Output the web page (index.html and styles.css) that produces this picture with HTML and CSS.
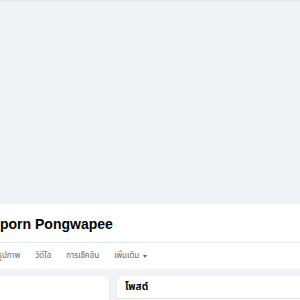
FILE: index.html
```html
<!DOCTYPE html>
<html lang="th">
<head>
    <meta charset="UTF-8">
    <meta name="viewport" content="width=device-width, initial-scale=1.0">
    <title>Profile</title>
    <link rel="stylesheet" href="styles.css">
</head>
<body>
    <!-- Cover -->
    <div class="cover"></div>

    <!-- Profile Header -->
    <header class="profile-head">
        <h1 class="name">porn Pongwapee</h1>
        <nav class="tabs">
            <a href="#">รูปภาพ</a>
            <a href="#">วิดีโอ</a>
            <a href="#">การเช็คอิน</a>
            <a href="#" class="more">เพิ่มเติม <span class="caret"></span></a>
        </nav>
    </header>

    <!-- Content -->
    <main class="content">
        <section class="card side"></section>
        <section class="card posts">
            <h2>โพสต์</h2>
        </section>
    </main>
</body>
</html>
```

FILE: styles.css
```css
/* General Styling */
body {
    margin: 0;
    padding: 0;
    background-color: #f0f2f5;
    font-family: "Liberation Sans", "Noto Sans Thai", "Noto Sans", sans-serif;
    color: #050505;
    overflow: hidden;
    height: 300px;
}

.cover {
    height: 204px;
    box-shadow: inset 0 2px 2px -1px rgba(0, 0, 0, 0.06);
}

/* Profile Header */
.profile-head {
    background-color: #fff;
    height: 65px;
    display: flex;
    flex-direction: column;
}

.name {
    margin: 0;
    font-size: 14px;
    font-weight: bold;
    line-height: 17px;
    padding-top: 12px;
    height: 26px;
    border-bottom: 1px solid #e4e6eb;
}

.tabs {
    display: flex;
    align-items: center;
    flex: 1;
    gap: 15px;
    margin-left: -2px;
}

.tabs a {
    text-decoration: none;
    color: #65676b;
    font-size: 8px;
    display: flex;
    align-items: center;
}

.caret {
    display: inline-block;
    margin-left: 4px;
    border-left: 2.5px solid transparent;
    border-right: 2.5px solid transparent;
    border-top: 3px solid #65676b;
}

/* Content */
.content {
    display: flex;
    gap: 8px;
    padding-top: 7px;
}

.card {
    background-color: #fff;
    border-radius: 6px;
    height: 60px;
    box-shadow: 0 1px 2px rgba(0, 0, 0, 0.1);
}

.side {
    width: 120px;
    margin-left: -11px;
}

.posts {
    flex: 1;
    margin-right: -20px;
}

.posts h2 {
    margin: 0;
    padding: 4px 8px;
    font-size: 10px;
    font-weight: bold;
    line-height: 14px;
    height: 14px;
    border-bottom: 1px solid #e4e6eb;
}
```
